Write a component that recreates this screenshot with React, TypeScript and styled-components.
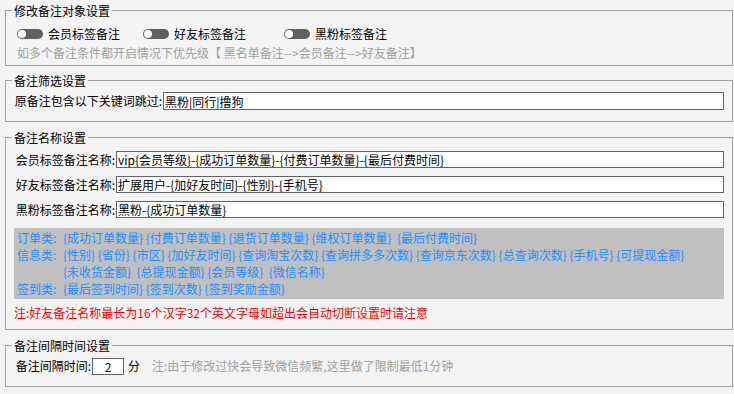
import React from "react";
import styled, { createGlobalStyle } from "styled-components";

const Global = createGlobalStyle`
  html, body { margin: 0; padding: 0; background: #f3f3f3; }
  body {
    font-family: "Noto Sans CJK SC", "Microsoft YaHei", sans-serif;
    font-size: 12px;
    color: #000;
  }
  * { box-sizing: border-box; }
`;

const Page = styled.div`
  width: 734px;
  height: 394px;
  padding: 2px 1px 0 5px;
  display: flex;
  flex-direction: column;
  gap: ${(p: { $gap?: number }) => p.$gap ?? 7}px;
`;

const Group = styled.fieldset<{ $pt: number; $pb: number; $mt?: number }>`
  margin: ${(p) => p.$mt ?? 0}px 0 0 0;
  min-width: 0;
  border: 1px solid #a0a0a0;
  padding: ${(p) => p.$pt}px 8px ${(p) => p.$pb}px 8px;
`;

const Legend = styled.legend`
  padding: 0 2px;
  margin-left: -2px;
  font-size: 12px;
  line-height: 17px;
  color: #000;
`;

const ToggleRow = styled.div`
  display: flex;
  align-items: center;
  height: 16px;
  padding-left: 3px;
`;

const ToggleItem = styled.label<{ $w?: number }>`
  display: flex;
  align-items: center;
  gap: 5px;
  flex: 0 0 ${(p) => (p.$w ? `${p.$w}px` : "auto")};
  line-height: 16px;
`;

const Switch = styled.span`
  position: relative;
  width: 26px;
  height: 10px;
  border-radius: 5px;
  background: #606060;
  flex: none;
  &::before {
    content: "";
    position: absolute;
    left: 1px;
    top: 1px;
    width: 8px;
    height: 8px;
    border-radius: 50%;
    background: #fff;
  }
`;

const Hint = styled.div`
  margin-top: 3px;
  padding-left: 3px;
  line-height: 16px;
  color: #a0a0a0;
  white-space: pre;
`;

const FieldRow = styled.div`
  display: flex;
  align-items: center;
  height: 18px;
`;

const FieldLabel = styled.span<{ $w: number }>`
  flex: 0 0 ${(p) => p.$w}px;
  text-align: right;
  white-space: nowrap;
  line-height: 16px;
`;

const TextInput = styled.input<{ $h?: number }>`
  flex: 1;
  min-width: 0;
  height: ${(p) => p.$h ?? 18}px;
  margin-left: 1px;
  border: 1px solid #646464;
  background: #fff;
  padding: 0 1px;
  font-family: "Noto Sans CJK SC", "Microsoft YaHei", sans-serif;
  font-size: 12px;
  color: #000;
  outline: none;
`;

const NameRows = styled.div`
  display: flex;
  flex-direction: column;
  gap: 8px;
`;

const NameRow = styled.div`
  display: flex;
  align-items: center;
  height: 17px;
`;

const TokenBox = styled.div`
  margin-top: 10px;
  background: #c0c0c0;
  padding: 1px 0 2px 3px;
  display: grid;
  grid-template-columns: 46px 1fr;
  line-height: 17px;
  color: #1e8fff;
`;

const TokenLabel = styled.span`
  white-space: nowrap;
`;

const TokenLine = styled.span`
  white-space: pre;
`;

const Warn = styled.div`
  margin-top: 6px;
  line-height: 16px;
  color: #ff0000;
`;

const SmallInput = styled.input`
  width: 32px;
  height: 17px;
  margin-left: 1px;
  border: 1px solid #646464;
  background: #fff;
  padding: 0;
  text-align: center;
  font-family: "Noto Sans CJK SC", "Microsoft YaHei", sans-serif;
  font-size: 12px;
  outline: none;
`;

const Unit = styled.span`
  margin-left: 4px;
  line-height: 16px;
`;

const Note = styled.span`
  margin-left: 12px;
  line-height: 16px;
  color: #a0a0a0;
  white-space: nowrap;
`;

const tokenRows: [string, string][] = [
  ["订单类:", "{成功订单数量} {付费订单数量} {退货订单数量} {维权订单数量}  {最后付费时间}"],
  ["信息类:", "{性别} {省份} {市区} {加好友时间} {查询淘宝次数} {查询拼多多次数} {查询京东次数} {总查询次数} {手机号} {可提现金额}"],
  ["", "{未收货金额}  {总提现金额} {会员等级}  {微信名称}"],
  ["签到类:", "{最后签到时间} {签到次数} {签到奖励金额}"],
];

const nameRows: [string, string][] = [
  ["会员标签备注名称:", "vip{会员等级}-{成功订单数量}-{付费订单数量}-{最后付费时间}"],
  ["好友标签备注名称:", "扩展用户-{加好友时间}-{性别}-{手机号}"],
  ["黑粉标签备注名称:", "黑粉-{成功订单数量}"],
];

export default function App() {
  return (
    <>
      <Global />
      <Page>
        <Group $pt={7} $pb={4}>
          <Legend>修改备注对象设置</Legend>
          <ToggleRow>
            <ToggleItem $w={126}>
              <Switch />
              会员标签备注
            </ToggleItem>
            <ToggleItem $w={141}>
              <Switch />
              好友标签备注
            </ToggleItem>
            <ToggleItem>
              <Switch />
              黑粉标签备注
            </ToggleItem>
          </ToggleRow>
          <Hint>如多个备注条件都开启情况下优先级【 黑名单备注--&gt;会员备注--&gt;好友备注】</Hint>
        </Group>

        <Group $pt={3} $pb={11} $mt={-1}>
          <Legend>备注筛选设置</Legend>
          <FieldRow>
            <FieldLabel $w={148}>原备注包含以下关键词跳过:</FieldLabel>
            <TextInput defaultValue="黑粉|同行|撸狗" />
          </FieldRow>
        </Group>

        <Group $pt={5} $pb={8}>
          <Legend>备注名称设置</Legend>
          <NameRows>
            {nameRows.map(([label, value]) => (
              <NameRow key={label}>
                <FieldLabel $w={101}>{label}</FieldLabel>
                <TextInput $h={17} defaultValue={value} />
              </NameRow>
            ))}
          </NameRows>
          <TokenBox>
            {tokenRows.map(([label, line], i) => (
              <React.Fragment key={i}>
                <TokenLabel>{label}</TokenLabel>
                <TokenLine>{line}</TokenLine>
              </React.Fragment>
            ))}
          </TokenBox>
          <Warn>注:好友备注名称最长为16个汉字32个英文字母如超出会自动切断设置时请注意</Warn>
        </Group>

        <Group $pt={3} $pb={11}>
          <Legend>备注间隔时间设置</Legend>
          <FieldRow>
            <FieldLabel $w={77}>备注间隔时间:</FieldLabel>
            <SmallInput defaultValue="2" />
            <Unit>分</Unit>
            <Note>注:由于修改过快会导致微信频繁,这里做了限制最低1分钟</Note>
          </FieldRow>
        </Group>
      </Page>
    </>
  );
}
